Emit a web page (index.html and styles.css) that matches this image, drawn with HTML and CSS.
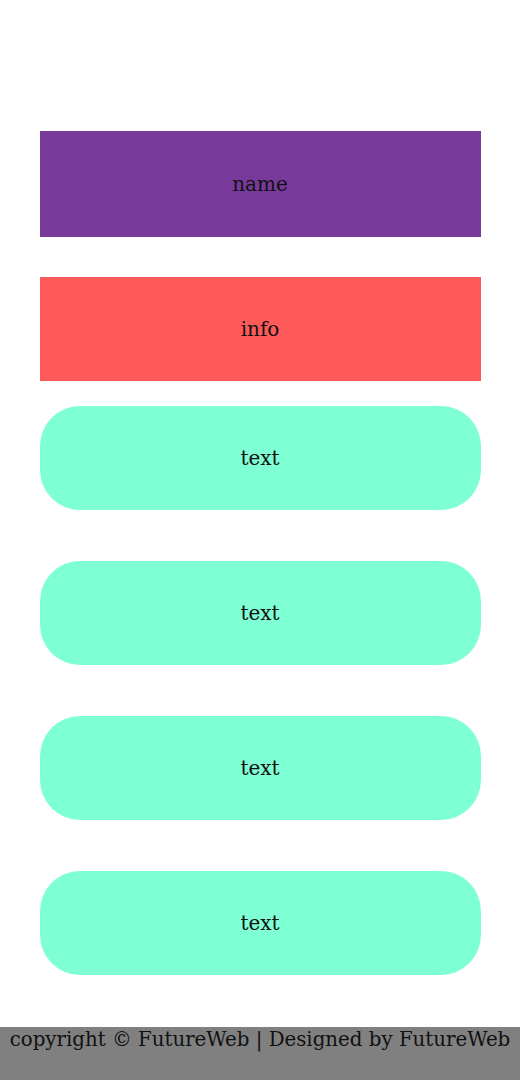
FILE: index.html
```html
<!DOCTYPE html>
<html>
<head>
<meta charset="utf-8">
<link rel="stylesheet" href="styles.css">
</head>
<body>
<main class="page">
  <div class="box name">name</div>
  <div class="box info">info</div>
  <div class="cards">
    <div class="box card">text</div>
    <div class="box card">text</div>
    <div class="box card">text</div>
    <div class="box card">text</div>
  </div>
</main>
<footer class="footer">copyright © FutureWeb | Designed by FutureWeb</footer>
</body>
</html>
```
FILE: styles.css
```css
html, body {
  margin: 0;
  padding: 0;
  background: #ffffff;
}
body {
  font-family: "DejaVu Serif", "Liberation Serif", serif;
  color: #111;
  min-height: 1080px;
  display: flex;
  flex-direction: column;
}
.page {
  display: flex;
  flex-direction: column;
  align-items: center;
  padding-top: 131px;
  padding-bottom: 52px;
  flex: 1;
}
.box {
  width: 441px;
  display: flex;
  align-items: center;
  justify-content: center;
  font-size: 20px;
  box-sizing: border-box;
}
.name {
  height: 106px;
  background: #783a9a;
}
.info {
  margin-top: 40px;
  height: 104px;
  background: #ff5a5a;
}
.cards {
  margin-top: 25px;
  display: flex;
  flex-direction: column;
  gap: 51px;
}
.card {
  height: 104px;
  background: #7fffd4;
  border-radius: 40px;
}
.footer {
  background: #808080;
  height: 53px;
  box-sizing: border-box;
  padding-top: 0;
  text-align: center;
  font-size: 19.8px;
  line-height: 25px;
  color: #111;
  white-space: nowrap;
}
```
